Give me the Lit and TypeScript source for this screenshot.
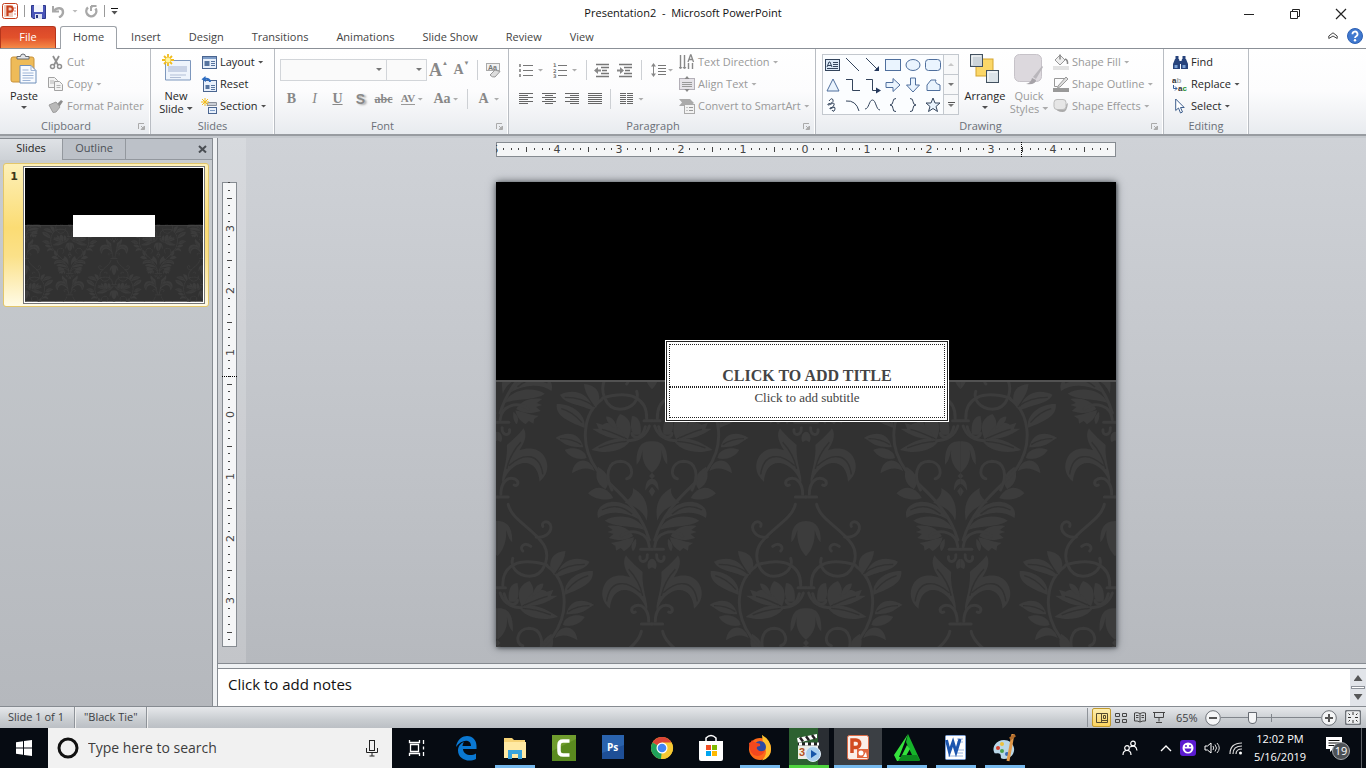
import { LitElement, html, svg, css } from "lit";
import { customElement } from "lit/decorators.js";
import { classMap } from "lit/directives/class-map.js";

const leafPaths = [
  "M158,72 C156,44 172,26 204,24 C202,46 196,58 168,96z",
  "M176,104 C184,56 230,34 276,56 C262,84 232,80 176,104z",
  "M202,156 C196,112 244,82 286,84 C290,122 250,136 202,156z",
  "M206,214 C216,170 254,164 290,186 C262,200 262,214 206,214z",
  "M200,234 C216,214 246,214 262,222 C248,246 214,254 196,246z",
  "M172,286 C184,240 236,244 240,292 C214,276 192,272 172,286z",
  "M162,272 C130,290 122,318 140,340 C168,322 172,300 162,272z",
  "M116,366 C136,330 170,326 192,352 C172,370 142,376 116,366z",
  "M40,430 C56,378 128,360 158,396 C166,408 164,418 162,426 C132,404 82,404 40,430z",
  "M22,462 C40,418 108,412 142,434 C112,456 62,446 22,462z",
  "M16,434 C6,384 26,352 58,336 C54,356 66,366 82,380 C60,388 28,400 16,434z",
  // upper blossom
  "M72,190 C52,144 72,122 96,114 C116,140 112,166 72,190z",
  "M80,190 C90,150 130,132 148,146 L168,140 L160,158 L180,158 L158,172 C130,186 110,190 80,190z",
  "M66,196 C102,176 142,196 182,222 C140,234 92,230 66,196z",
  "M104,160 C108,136 122,120 138,122 C136,140 122,152 104,160z",
  "M34,176 C30,142 40,120 60,120 C64,140 66,160 56,176z",
  // large bell
  "M0,196 C40,192 48,228 46,266 C34,254 32,238 28,222 C32,252 20,276 0,290z",
  "M0,290 L9,300 L0,310z",
  "M0,308 C16,308 20,326 20,344 C12,334 8,326 0,324z",
  "M0,332 L10,346 L0,362z",
  // lower blossom
  "M56,480 C72,452 104,446 134,450 L118,462 L134,468 L116,474 L130,486 C104,494 78,496 56,480z",
  "M54,484 C82,490 112,502 124,500 L110,510 L108,524 L94,516 L84,526 C66,514 56,502 54,484z",
  "M48,488 C44,508 52,522 58,526 C66,510 60,498 48,488z",
  // plume
  "M78,538 C92,560 78,585 66,604 C92,594 126,596 142,625 C156,650 150,680 126,698 C124,664 108,640 78,642 C50,646 26,670 16,704 C6,690 32,640 28,588 C42,575 62,560 78,538z",
  "M0,548 C12,548 18,570 10,580 L0,574z",
  // hanging bell above
  "M0,-66 C34,-66 46,-40 44,-2 C32,-14 30,-28 26,-38 C28,-10 20,20 0,40z",
];

const stemPaths = [
  "M150,70 C206,110 220,204 166,280 C136,326 40,380 8,492",
  "M32,-116 C42,-70 104,-46 138,4 C160,40 142,98 96,100 C56,98 38,70 46,46",
  "M116,-18 C150,-14 166,-40 158,-56 C148,-70 130,-62 136,-50",
  "M16,128 C14,70 60,40 148,66",
  "M100,10 C80,-6 64,14 76,24",
  "M0,134 H24",
  "M8,150 C16,174 34,196 82,194",
  "M20,152 C30,196 60,186 60,172",
  "M120,342 C142,300 134,256 94,256 C56,258 52,304 76,308",
  "M8,512 C12,468 60,456 92,480",
  "M0,520 H34",
  "M14,536 C12,562 40,562 36,542",
  "M10,736 C10,700 30,682 52,690 C68,698 60,714 50,708",
  "M0,744 H32",
];

const motif = () => svg`<g fill="#3c3c3c" stroke="none">
  ${leafPaths.map((d) => svg`<path d=${d}></path>`)}
  <g fill="none" stroke="#3c3c3c" stroke-width="9" stroke-linecap="round">
    ${stemPaths.map((d) => svg`<path d=${d}></path>`)}
  </g>
  <g fill="none" stroke="#323232" stroke-width="4">
    <path d="M172,92 C200,70 230,64 262,64 M210,140 C230,116 250,104 272,98 M212,206 C230,194 254,188 276,188 M60,414 C90,388 120,386 150,402 M34,650 C84,606 128,616 136,676 M28,660 C34,630 46,606 70,580 M82,186 C104,176 130,164 150,160 M76,196 C106,198 134,206 160,216"></path>
  </g>
</g>`;

const motifSpots = [
  [1.5, 167], [1.5, -127], [156, 0], [310, 167], [310, -127], [464.5, 0], [619, 167], [619, -127], [156, 294], [464.5, 294],
];

const slideArt = () => html`<svg class="art" viewBox="0 0 620 465" aria-hidden="true">
  <rect width="620" height="465" fill="#000"></rect>
  <svg y="198" width="620" height="267" viewBox="0 0 620 267">
    <rect width="620" height="267" fill="#313131"></rect>
    ${motifSpots.map(([x, y]) => svg`<g transform="translate(${x} ${y - 4}) scale(.3333)">
      ${motif()}<g transform="scale(-1 1)">${motif()}</g></g>`)}
    <rect width="620" height="2" fill="#525252"></rect>
  </svg>
</svg>`;

const G = "#8f8f8f";
const art: Record<string, [number, number, unknown]> = {
  ppt: [16, 16, svg`<rect x=".5" y=".5" width="15" height="15" rx="2" fill="#fff" stroke="#c43e1c"></rect><rect x="2" y="2" width="9" height="12" fill="#f0cdbf"></rect><path d="M5.500 13V3.500H8.200a2.600 2.600 0 0 1 0 5.200H5.500" fill="none" stroke="#c8401b" stroke-width="2.200"></path><path d="M12 5h2M12 8h2M12 11h2" stroke="#d88"></path>`],
  save: [15, 15, svg`<path d="M.5 1.500h14v13H2l-1.500-1.500z" fill="#4a55b8" stroke="#2e3a8c"></path><rect x="3" y="1" width="9" height="7" fill="#f3f5fb"></rect><rect x="4" y="10" width="7" height="5" fill="#dfe3f2"></rect><rect x="5" y="11" width="2" height="3" fill="#29357e"></rect>`],
  undo: [13, 13, svg`<path d="M1 1v5.500h6" fill="none" stroke="#a8a8a8" stroke-width="2"></path><path d="M2 6C5 2 11 2.500 11 7c0 3-2 4.500-4 5.500" fill="none" stroke="#a8a8a8" stroke-width="2.400"></path>`],
  redo: [13, 13, svg`<path d="M3 2.500A5 5 0 1 0 10.500 3.500" fill="none" stroke="#a8a8a8" stroke-width="2.400"></path><path d="M6 1v5M11.500 1H7v1.500" fill="none" stroke="#a8a8a8" stroke-width="2"></path>`],
  paste: [30, 32, svg`<rect x="2" y="4" width="23" height="25" rx="2" fill="#eebb58" stroke="#c9923a"></rect><path d="M8 6V3.500h3.500a2.500 2.500 0 0 1 5 0H20V6z" fill="#e4e6ea" stroke="#666a70"></path><path d="M11 12.500h11l5 5V30H11z" fill="#f8fbff" stroke="#6f8fba"></path><path d="M22 12.500v5h5M13.500 17h6M13.500 20h11M13.500 22.500h11M13.500 25h11M13.500 27.500h8" fill="none" stroke="#9db4d6"></path>`],
  cut: [14, 15, svg`<path d="M4 1l5 9M10 1L5 10" stroke="${G}" stroke-width="1.800"></path><circle cx="3.500" cy="11.500" r="2" fill="none" stroke="${G}" stroke-width="1.500"></circle><circle cx="10.500" cy="11.500" r="2" fill="none" stroke="${G}" stroke-width="1.500"></circle>`],
  copy: [16, 14, svg`<g fill="#f3f3f3" stroke="#a2a2a2"><path d="M.5 .5h6l3 3v7h-9z"></path><path d="M6.500 4.500h5l3 3v6h-8z"></path></g><path d="M2 4h4M2 6h4M8.500 8.500h4M8.500 10.500h4" stroke="#b5b5b5"></path>`],
  painter: [16, 14, svg`<path d="M9 5l4-4 2 1.500-3.500 5z" fill="#8d8d8d"></path><path d="M1 6l7-3 4 5-4 5-3 .500z" fill="#b9b9b9" stroke="#9c9c9c"></path>`],
  newslide: [30, 31, svg`<path d="M4.500 7.500h25v19.500h-25z" fill="#eef4fc" stroke="#7d97bd"></path><rect x="7" y="13" width="19" height="6" fill="#c9d3e6"></rect><path d="M9 22h16M9 24.500h11" stroke="#b2bfd6"></path><path d="M7 1v12M1 7h12M3 3l8 8M11 3l-8 8" stroke="#f1bc1d" stroke-width="1.800"></path><circle cx="7" cy="7" r="2.500" fill="#fff5a0"></circle>`],
  layout: [15, 13, svg`<rect x=".5" y=".5" width="14" height="12" fill="#e8f0fb" stroke="#4a6590"></rect><rect x="1" y="1" width="13" height="2" fill="#7d9cc7"></rect><rect x="2.500" y="5" width="5" height="5" fill="#56749f"></rect><path d="M9 5.500h4M9 7.500h4M9 9.500h4" stroke="#56749f"></path>`],
  reset: [16, 16, svg`<rect x="2.500" y="4.500" width="13" height="11" fill="#e8f0fb" stroke="#4a6590"></rect><rect x="4.500" y="9" width="4" height="4" fill="#56749f"></rect><path d="M10 9.500h4M10 11.500h4M10 13.500h4" stroke="#56749f"></path><path d="M9 6C9 3.500 7 2.500 4 3" fill="none" stroke="#2d6cc0" stroke-width="2"></path><path d="M4.500 0L.5 3.200 5 6z" fill="#2d6cc0"></path>`],
  section: [16, 16, svg`<path d="M7 4.500h8.500v3H6z" fill="#c9cdd4" stroke="#8a909b"></path><rect x="7.500" y="9.500" width="8" height="6" fill="#e8f0fb" stroke="#4a6590"></rect><path d="M9 12.500h5" stroke="#7d9cc7"></path><path d="M4 0v8M0 4h8M1 1l6 6M7 1L1 7" stroke="#f1bc1d"></path>`],
  clear: [17, 17, svg`<rect x="1.500" y="1.500" width="13" height="7" fill="#f1f1f1" stroke="#aaa"></rect><text x="3" y="8" font-size="7" font-weight="700" fill="#777" font-family="Liberation Sans, sans-serif">Aa</text><path d="M5 13l5-5 5 1.500-5 5.500q-3 .500-5-2z" fill="#ddd" stroke="#999"></path>`],
  bullets: [14, 14, svg`<path d="M4 2.500h10M4 7.500h10M4 12.500h10" stroke="#777"></path><g fill="#999"><rect y="1" width="2" height="3"></rect><rect y="6" width="2" height="3"></rect><rect y="11" width="2" height="3"></rect></g>`],
  numbers: [14, 15, svg`<path d="M5 2.500h9M5 7.500h9M5 12.500h9" stroke="#777"></path><g font-size="5" fill="#777" font-family="DejaVu Sans, sans-serif"><text y="4">1</text><text y="9.500">2</text><text y="15">3</text></g>`],
  outdent: [16, 15, svg`<path d="M2 1.500h13M7 4.500h8M8 7.500h5M7 10.500h8M2 13.500h13" stroke="#777" stroke-width="1.400"></path><path d="M0 7.500L4 4v2.500h3v2H4V11z" fill="#888"></path>`],
  indent: [16, 15, svg`<path d="M2 1.500h13M7 4.500h8M8 7.500h5M7 10.500h8M2 13.500h13" stroke="#777" stroke-width="1.400"></path><path d="M7 7.500L3 4v2.500H0v2h3V11z" fill="#888"></path>`],
  spacing: [15, 16, svg`<path d="M7 3.500h8M7 6.500h8M7 9.500h8M7 12.500h8" stroke="#777"></path><path d="M2.500 2v12" stroke="#888"></path><path d="M0 4.500L2.500 1 5 4.500zM0 11.500L2.500 15 5 11.500z" fill="#888"></path>`],
  left: [14, 12, svg`<path d="M0 .5h14M0 2.500h9M0 4.500h14M0 6.500h9M0 8.500h14M0 10.500h9" stroke="#666"></path>`],
  center: [14, 12, svg`<path d="M0 .5h14M3 2.500h8M0 4.500h14M3 6.500h8M0 8.500h14M3 10.500h8" stroke="#666"></path>`],
  right: [14, 12, svg`<path d="M0 .5h14M5 2.500h9M0 4.500h14M5 6.500h9M0 8.500h14M5 10.500h9" stroke="#666"></path>`],
  justify: [14, 12, svg`<path d="M0 .5h14M0 2.500h14M0 4.500h14M0 6.500h14M0 8.500h14M0 10.500h14" stroke="#666"></path>`],
  columns: [13, 12, svg`<path d="M0 .5h6M0 2.500h6M0 4.500h6M0 6.500h6M0 8.500h6M0 10.500h6M7 .5h6M7 2.500h6M7 4.500h6M7 6.500h6M7 8.500h6M7 10.500h6" stroke="#666"></path>`],
  textdir: [16, 16, svg`<path d="M1.500 1v13M5.500 1v13M9.500 9v6M13.500 9v6" stroke="#888" stroke-width="1.400"></path><path d="M0 13l1.500 2L3 13M4 13l1.500 2L7 13" fill="none" stroke="#888"></path><path d="M9 8l2.500-7h.500L14.500 8M10 5.500h4" fill="none" stroke="#888" stroke-width="1.300"></path>`],
  aligntext: [16, 16, svg`<rect x=".5" y="2.500" width="15" height="11" fill="#e6e3e8" stroke="#b3afb7"></rect><path d="M3 6.500h10M3 8.500h10M3 10.500h10" stroke="#999"></path><path d="M5.500 3L8 0l2.500 3zM5.500 13L8 16l2.500-3z" fill="#888"></path>`],
  smartart: [16, 16, svg`<path d="M0 1h11l4 4-4 3H0l3-3.500z" fill="#aaa"></path><rect x="5.500" y="6.500" width="10" height="9" fill="#f2f2f2" stroke="#aaa"></rect><path d="M7.500 9.500h1M7.500 12.500h1M10 9.500h4M10 12.500h4" stroke="#999"></path>`],
  arrange: [32, 32, svg`<rect x="7" y="6" width="17" height="17" fill="#fbd768" stroke="#d3a42e"></rect><rect x="1.500" y="1.500" width="12" height="12" fill="#ccd4da" stroke="#42515f"></rect><rect x="17.500" y="17.500" width="12" height="12" fill="#dbe3e8" stroke="#42515f"></rect><path d="M3 12V3h9" fill="none" stroke="#fff"></path><path d="M19 28v-9h9" fill="none" stroke="#fff"></path>`],
  quick: [32, 32, svg`<rect x="1.500" y="1.500" width="27" height="27" rx="5" fill="#dcd8dd" stroke="#c6c2c8"></rect><path d="M29 13L20 24l3 2 7-12z" fill="#b9b6bb"></path><path d="M13 31q5-1 6-6l4 2q0 5-10 4z" fill="#a6a3a8"></path>`],
  fill: [16, 16, svg`<path d="M7 1L2 6l5 5 5-5z" fill="#eee" stroke="#999"></path><path d="M7 .500v5M12 5q3 1 2.500 5" fill="none" stroke="#888" stroke-width="1.500"></path><rect y="12" width="16" height="4" fill="#e2e2e2"></rect>`],
  outline: [16, 16, svg`<path d="M12 2.500H1.500v8h3" fill="none" stroke="#999"></path><path d="M5 10l8-9 2 2-8 8-2.500.500z" fill="#ddd" stroke="#999"></path><rect y="12" width="16" height="4" fill="#999"></rect>`],
  effects: [16, 16, svg`<path d="M2 9q1 5 8 5 4 0 5-9L9 10z" fill="#aaa"></path><rect x="1" y="1.500" width="12" height="10" rx="3" fill="#e6e6e6" stroke="#bbb"></rect>`],
  find: [15, 13, svg`<g fill="#27437c"><path d="M2 3h4l1 4v6H0V8z"></path><path d="M9 3h4l2 5v5H8V7z"></path><rect x="2.500" width="3" height="3"></rect><rect x="9.500" width="3" height="3"></rect><rect x="6" y="5" width="3" height="3"></rect></g><path d="M1.500 12V9h3v3zM9.500 12V9h3v3z" fill="#7aa0d4"></path>`],
  replace: [17, 18, svg`<g font-family="Liberation Sans, sans-serif" font-size="8" font-weight="700"><text y="8" fill="#333">a<tspan fill="#aaa">b</tspan></text><text x="6" y="16" fill="#333">a<tspan fill="#23902f">c</tspan></text></g><path d="M1.500 10v3.500H5M3 11.500l2 2-2 2" fill="none" stroke="#365f9c"></path>`],
  select: [10, 16, svg`<path d="M.7 1v11.500l2.800-2.500 2 5 2-1-2-4.500h3.700z" fill="#fff" stroke="#3f5f8d"></path>`],
  launcher: [7, 7, svg`<path d="M.5 6V.5H6" fill="none" stroke="#aaa"></path><path d="M6.500 3v3.500H3zM3 3l3 3" fill="#aaa" stroke="#aaa"></path>`],
  help: [16, 16, svg`<circle cx="8" cy="8" r="7.500" fill="#3f78cf" stroke="#2e61b4"></circle><path d="M5.500 6.200a2.500 2.500 0 1 1 3.700 2q-1.200.8-1.200 1.800" fill="none" stroke="#fff" stroke-width="1.800"></path><circle cx="8" cy="12.300" r="1.200" fill="#fff"></circle>`],
  collapse: [10, 8, svg`<path d="M.8 4L5 .8 9.200 4v2.500L5 4 .8 6.500z" fill="none" stroke="#444"></path>`],
  min: [12, 12, svg`<path d="M1 6.500h10" stroke="#222"></path>`],
  restore: [12, 12, svg`<path d="M1.500 3.500h7v7h-7zM3.500 3V1.500h7v7H9" fill="none" stroke="#222"></path>`],
  close: [12, 12, svg`<path d="M1 1l10 10M11 1L1 11" stroke="#222" stroke-width="1.200"></path>`],
  panelx: [9, 8, svg`<path d="M1 1l7 6.500M8 1L1 7.500" stroke="#4a4e53" stroke-width="2"></path>`],
  normal: [12, 10, svg`<path d="M.5 .5h11v9H.5zM5.500 .5v9M7.500 2.500h2v3h-2zM5.500 7.500h6" fill="none" stroke="#544a2e"></path>`],
  sorter: [12, 10, svg`<path d="M.5 .5h4v3h-4zM7.500 .5h4v3h-4zM.5 6.500h4v3h-4zM7.500 6.500h4v3h-4z" fill="none" stroke="#444"></path>`],
  reading: [12, 11, svg`<path d="M6 1.500Q3 0 .5 1v8Q3 8.500 6 10 9 8.500 11.500 9V1Q9 0 6 1.500zM6 1.500V10M2 3.500h2.500M2 5.500h2.500M7.500 3.500H10M7.500 5.500H10" fill="none" stroke="#444"></path>`],
  show: [12, 11, svg`<path d="M0 .5h12M1.500 1v4.500h9V1M6 5.500v4M3 10.500h6" fill="none" stroke="#444"></path>`],
  minus: [16, 16, svg`<circle cx="8" cy="8" r="7.300" fill="#f4f5f6" stroke="#6f747a"></circle><path d="M4 8h8" stroke="#555" stroke-width="2"></path>`],
  plus: [16, 16, svg`<circle cx="8" cy="8" r="7.300" fill="#f4f5f6" stroke="#6f747a"></circle><path d="M4 8h8M8 4v8" stroke="#555" stroke-width="2"></path>`],
  fit: [16, 15, svg`<rect x=".5" y=".5" width="15" height="14" rx="2" fill="#eceeef" stroke="#70757b" stroke-width="1.500"></rect><path d="M8 2v3M8 10v3M3 7.500h3M10 7.500h3M3.500 3.500L5 5M12.500 3.500L11 5M3.500 11.500L5 10M12.500 11.500L11 10" stroke="#333"></path>`],
  windows: [16, 16, svg`<path d="M0 2.200L7 1.300v6.200H0zM8 1.100L16 0v7.500H8zM0 8.500h7v6.200L0 13.800zM8 8.500h8V16L8 14.900z" fill="#fff"></path>`],
  cortana: [22, 22, svg`<circle cx="11" cy="11" r="9" fill="none" stroke="#111" stroke-width="3"></circle>`],
  mic: [12, 18, svg`<rect x="3.500" y="1.500" width="5" height="10" fill="none" stroke="#222"></rect><path d="M.5 9v4.500h11V9M6 13.500V17M3.500 17h5" fill="none" stroke="#222"></path>`],
  taskview: [18, 18, svg`<path d="M1.500 1v2.500h10V1M1.500 17v-2.500h10V17M2.500 5.500h8v7h-8zM15.500 1v4M15.500 13v4M15.500 7.500v3" fill="none" stroke="#fff" stroke-width="1.300"></path>`],
  edge: [24, 26, svg`<path d="M2 12C3 4 9 1 13 1c6 0 9.500 4.500 9.500 10v3H9c.5 6 8 7.500 13 4.500v5.500C14 28 4 24 4 15.500 4 11 7 8 10 7c-1 1.500-1.500 3-1.500 4h8.500c0-7-9-7.500-15 1z" fill="#0a78d2"></path>`],
  explorer: [24, 24, svg`<path d="M1 2h8l2 2h11v18H1z" fill="#f6d376"></path><path d="M1 6h22v16H1z" fill="#ffe9a3"></path><path d="M5 23V14h14v9h-4v-5H9v5z" fill="#38a3dc"></path>`],
  camtasia: [24, 26, svg`<rect width="24" height="26" fill="#6f9c2e"></rect><path d="M0 16L24 4v22H0z" fill="#5a8a1f"></path><path d="M17.500 6H11q-4 0-4 4v6q0 4 4 4h6.500" fill="none" stroke="#fff" stroke-width="3.500"></path>`],
  ps: [22, 26, svg`<rect width="22" height="24" fill="#1e4f96"></rect><path d="M0 0h22v10L0 18z" fill="#2a63ad"></path><text x="5" y="16" font-size="10" font-weight="700" fill="#fff" font-family="Open Sans, sans-serif">Ps</text>`],
  chrome: [24, 24, svg`<circle cx="12" cy="12" r="11" fill="#f2c12e"></circle><path d="M12 12L2.500 6.500A11 11 0 0 1 21.500 6.500z" fill="#db4437"></path><path d="M12 12L2.500 6.500A11 11 0 0 0 11 23l5-9z" fill="#1fa25b"></path><path d="M12 12L12 6.500h9.500A11 11 0 0 1 11 23z" fill="#f7c933"></path><circle cx="12" cy="12" r="5.500" fill="#fff"></circle><circle cx="12" cy="12" r="4.300" fill="#4285f4"></circle>`],
  store: [24, 28, svg`<path d="M7 8V4q5-5 10 0v4" fill="none" stroke="#fff" stroke-width="1.500"></path><path d="M0 7h24v18q0 2-2 2H2q-2 0-2-2z" fill="#fff"></path><path d="M7 11h5v5H7z" fill="#f04e24"></path><path d="M13 11h5v5h-5z" fill="#7fba00"></path><path d="M7 17h5v5H7z" fill="#00a4ef"></path><path d="M13 17h5v5h-5z" fill="#ffb900"></path>`],
  firefox: [24, 26, svg`<circle cx="12" cy="14" r="11" fill="#ff6a1a"></circle><path d="M14 0q9 5 9 14 0 9-9 11.500 6-6 3-13T14 0z" fill="#ffc02e"></path><circle cx="12" cy="12" r="6" fill="#2b49a5"></circle><path d="M1 8q2 0 3-3 2 3 5 3 4 0 3 3-4 0-3 3 3 4 8 1-2 6-8 6Q1 20 1 8z" fill="#f4481e"></path>`],
  clapper: [24, 30, svg`<rect x="1" y="11" width="20" height="15" fill="#eceee6"></rect><path d="M0 5L20 1v4L1 10z" fill="#fff"></path><path d="M3 4.500l3 4M9 3.200l3 4M15 2l3 4" stroke="#222" stroke-width="2.500"></path><path d="M1 11h20" stroke="#222" stroke-width="3"></path><path d="M2 11h20" stroke="#fff" stroke-width="3" stroke-dasharray="3 3"></path><text x="2" y="23" font-size="11" font-weight="700" fill="#b5521f" font-family="Liberation Sans, sans-serif">3</text><circle cx="16" cy="21" r="7.500" fill="#a9d0ee" stroke="#e2effa"></circle><path d="M14 17l6 4-6 4z" fill="#1556a8"></path>`],
  pptbig: [24, 28, svg`<rect x="1.500" y="1.500" width="21" height="24" rx="2" fill="#fbeee8" stroke="#dd6a45"></rect><path d="M6 19V6h4a3.700 3.700 0 0 1 0 7.500H6" fill="none" stroke="#d24a20" stroke-width="3.500"></path><rect x="11" y="15" width="11" height="9" fill="#e2673f"></rect><circle cx="15" cy="19" r="2.500" fill="#fff"></circle><path d="M17 23l3-5 1 5z" fill="#fff"></path>`],
  green: [26, 28, svg`<path d="M14 0l12 26H8l4-5h6L12 8z" fill="#16b52a"></path><path d="M14 0L0 21l3 6h6l7-12-3-4-6 12h-2z" fill="#35e23c"></path><path d="M4 27l4-6h15l3 6z" fill="#0c8a1d"></path>`],
  word: [24, 28, svg`<rect x="1.500" y="1.500" width="20" height="24" rx="1" fill="#fff" stroke="#7d9fd1"></rect><path d="M13 5h6M13 8h6M14 16h6M13 19h6M4 22h15" stroke="#9db8e0"></path><path d="M2.500 6l3 12 3.500-10 3 10 4-13" fill="none" stroke="#1d56ae" stroke-width="3"></path>`],
  paint: [26, 28, svg`<path d="M12 6C4 6 0 13 2 18c1 3 4 0 6 2s-1 5 4 5c7 0 11-6 10-11-1-5-5-8-10-8z" fill="#b9d7e8"></path><circle cx="6" cy="14" r="2" fill="#d9402c"></circle><circle cx="10" cy="10" r="2" fill="#ecc03a"></circle><circle cx="15" cy="20" r="2" fill="#3768b5"></circle><circle cx="10" cy="17" r="2" fill="#4ba14d"></circle><path d="M21 0L16 27" stroke="#e29a4a" stroke-width="3"></path><path d="M18 5L23 1" stroke="#b26d2c" stroke-width="3"></path>`],
  people: [16, 16, svg`<g fill="none" stroke="#fff" stroke-width="1.200"><circle cx="5" cy="8" r="2.300"></circle><path d="M1 15q0-4.500 4-4.500t4 4.500"></path><circle cx="11" cy="3.500" r="2.300"></circle><path d="M8 7q6-3 7 3.500"></path></g>`],
  up: [12, 8, svg`<path d="M1 7l5-5 5 5" fill="none" stroke="#fff" stroke-width="1.400"></path>`],
  yahoo: [16, 16, svg`<rect width="16" height="16" rx="3" fill="#5b1bd0"></rect><circle cx="8" cy="8" r="5.500" fill="#fff"></circle><path d="M4.500 8.500h7q-1 3.500-3.500 3.500T4.500 8.500z" fill="#5b1bd0"></path><circle cx="6" cy="6" r="1" fill="#5b1bd0"></circle><circle cx="10" cy="6" r="1" fill="#5b1bd0"></circle>`],
  sound: [17, 14, svg`<path d="M1 5h2.500L7 2v10L3.500 9H1z" fill="none" stroke="#fff"></path><path d="M9 5q1.500 2 0 4M11 3.500q3 3.500 0 7M13 2q4.500 5 0 10" fill="none" stroke="#ddd"></path>`],
  wifi: [14, 14, svg`<g fill="none" stroke="#ddd" stroke-width="1.200"><path d="M1 13Q1 2 13 2"></path><path d="M4 13Q4 5 13 5"></path><path d="M7 13Q7 8 13 8"></path></g><circle cx="11.500" cy="12" r="1.500" fill="#fff"></circle>`],
  notify: [26, 26, svg`<path d="M1 2h16v12H8l-3 3v-3H1z" fill="#fff"></path><path d="M3.500 5.500h11M3.500 8h11M3.500 10.500h8" stroke="#111"></path><circle cx="16" cy="16" r="8.500" fill="#4d5156" stroke="#a5a8ab"></circle><text x="16" y="20" text-anchor="middle" font-size="11" fill="#fff" font-family="Open Sans, sans-serif">19</text>`],
};

const icon = (name: string) => {
  const [w, h, body] = art[name];
  return html`<svg width=${w} height=${h} viewBox="0 0 ${w} ${h}" aria-hidden="true">${body}</svg>`;
};

const shapes = [
  svg`<rect x="2.500" y="4.500" width="14" height="11" fill="#dce9f7" stroke="#33445c"></rect><path d="M4 12l2-5h1l2 5M5 10.500h3M10 7.500h5M10 9.500h5M10 11.500h5M4 13.500h11" fill="none" stroke="#33445c"></path>`,
  svg`<path d="M3 3l13 13" stroke="#33445c"></path>`,
  svg`<path d="M3 3l12 12" stroke="#33445c"></path><path d="M16 16v-5l-5 5z" fill="#24385c"></path>`,
  svg`<rect x="2.500" y="4.500" width="15" height="11" fill="#eaf4fe" stroke="#4f6f9d"></rect>`,
  svg`<ellipse cx="10" cy="10" rx="7" ry="5.500" fill="#eaf4fe" stroke="#4f6f9d"></ellipse>`,
  svg`<rect x="2.500" y="4.500" width="15" height="11" rx="3" fill="#eaf4fe" stroke="#4f6f9d"></rect>`,
  svg`<path d="M10 4l6 12H4z" fill="#eaf4fe" stroke="#4f6f9d"></path>`,
  svg`<path d="M3 4.500h6.500v11H17" fill="none" stroke="#33445c"></path>`,
  svg`<path d="M3 4.500h6.500v11H14" fill="none" stroke="#33445c"></path><path d="M13 12.500l5 3-5 3z" fill="#24385c"></path>`,
  svg`<path d="M3 7.500h7v-4l7 6.500-7 6.500v-4H3z" fill="#eaf4fe" stroke="#4f6f9d"></path>`,
  svg`<path d="M7.500 3h5v7h4L10 17l-6.500-7h4z" fill="#eaf4fe" stroke="#4f6f9d"></path>`,
  svg`<path d="M8 5h5q-2 3 4 5v5.500H4V10z" fill="#eaf4fe" stroke="#4f6f9d"></path>`,
  svg`<path d="M6 6q3-4 4-1t-5 4q-1 2 3 0t3 1-4 3q-1 2 2 0t3 0-1 3-2-1" fill="none" stroke="#33445c"></path>`,
  svg`<path d="M3 6q10-1 13 10" fill="none" stroke="#33445c"></path>`,
  svg`<path d="M2 14C6 14 6 5 9.500 5S13 15 17 15" fill="none" stroke="#33445c"></path>`,
  svg`<path d="M13 3.500q-3 0-3 3t-3 3.500q3 0 3 3.500t3 3" fill="none" stroke="#33445c"></path>`,
  svg`<path d="M7 3.500q3 0 3 3t3 3.500q-3 0-3 3.500t-3 3" fill="none" stroke="#33445c"></path>`,
  svg`<path d="M10 3l2 5h5l-4 3.500 1.500 5-4.500-3-4.500 3L7 11.500 3 8h5z" fill="#eaf4fe" stroke="#33445c"></path>`,
];

type Item = { icon: string; text: string; off?: boolean; menu?: boolean };
const clipboardItems: Item[] = [
  { icon: "cut", text: "Cut", off: true },
  { icon: "copy", text: "Copy", off: true, menu: true },
  { icon: "painter", text: "Format Painter", off: true },
];
const slideItems: Item[] = [
  { icon: "layout", text: "Layout", menu: true },
  { icon: "reset", text: "Reset" },
  { icon: "section", text: "Section", menu: true },
];
const textItems: Item[] = [
  { icon: "textdir", text: "Text Direction", off: true, menu: true },
  { icon: "aligntext", text: "Align Text", off: true, menu: true },
  { icon: "smartart", text: "Convert to SmartArt", off: true, menu: true },
];
const shapeItems: Item[] = [
  { icon: "fill", text: "Shape Fill", off: true, menu: true },
  { icon: "outline", text: "Shape Outline", off: true, menu: true },
  { icon: "effects", text: "Shape Effects", off: true, menu: true },
];
const editItems: Item[] = [
  { icon: "find", text: "Find" },
  { icon: "replace", text: "Replace", menu: true },
  { icon: "select", text: "Select", menu: true },
];

const apps = [
  { icon: "taskview", name: "Task View" },
  { icon: "edge", name: "Microsoft Edge" },
  { icon: "explorer", name: "File Explorer", open: true },
  { icon: "camtasia", name: "Camtasia" },
  { icon: "ps", name: "Photoshop" },
  { icon: "chrome", name: "Chrome" },
  { icon: "store", name: "Store" },
  { icon: "firefox", name: "Firefox", open: true },
  { icon: "clapper", name: "Media Player", open: true, busy: true },
  { icon: "pptbig", name: "PowerPoint", open: true, active: true },
  { icon: "green", name: "Editor", open: true },
  { icon: "word", name: "Word", open: true },
  { icon: "paint", name: "Paint", open: true },
];

const ruler = (length: number, vertical: boolean, cursor: number) => {
  const mid = length / 2 - (vertical ? 0 : 1);
  const last = Math.floor(mid / 7.75);
  const marks = [];
  for (let i = vertical ? -last : -last - 1; i <= last; i++) {
    const p = mid + i * 7.75;
    if (i % 8 === 0) {
      marks.push(vertical
        ? svg`<text transform="translate(12 ${p}) rotate(-90)" text-anchor="middle">${Math.abs(i / 8)}</text>`
        : svg`<text x=${p} y="11" text-anchor="middle">${Math.abs(i / 8)}</text>`);
    } else {
      const size = i % 8 === 4 || i % 8 === -4 ? 5 : 2;
      const at = Math.round(p);
      marks.push(vertical
        ? svg`<rect x=${size === 5 ? 5 : 6} y=${at} width=${size} height="1"></rect>`
        : svg`<rect x=${at} y=${size === 5 ? 5 : 6} width="1" height=${size}></rect>`);
    }
  }
  const box = vertical ? `0 0 15 ${length}` : `0 0 ${length} 15`;
  return html`<svg class="ruler" viewBox=${box} aria-hidden="true">
    <rect x=".5" y=".5" width=${(vertical ? 15 : length) - 1} height=${(vertical ? length : 15) - 1} fill="#f5f6f7" stroke="#868b91"></rect>
    <g fill="#444">${marks}</g>
    ${vertical
      ? svg`<path d="M0 ${cursor}.5H15" stroke="#000" stroke-dasharray="1 1"></path>`
      : svg`<path d="M${cursor}.5 0V15" stroke="#000" stroke-dasharray="1 1"></path>`}
  </svg>`;
};

@customElement("app-root")
export class AppRoot extends LitElement {
  static styles = css`
    :host {
      display: block;
      font: 11px/14px "Open Sans", "Noto Sans", sans-serif;
      color: #262626;
      background: #fff;
    }
    * { box-sizing: border-box; }
    button, select, input, textarea {
      font: inherit; color: inherit; background: none; border: 0; padding: 0; margin: 0; border-radius: 0;
    }
    svg { display: block; flex: none; }
    .window { display: flex; flex-direction: column; min-height: 100vh; margin-right: 2px; }
    .caret { width: 6px; height: 3px; flex: none; background: currentColor; clip-path: polygon(0 0, 100% 0, 50% 100%); opacity: .8; }

    .title { display: grid; grid-template-columns: 1fr auto 1fr; height: 26px; align-items: center; }
    .quick { display: flex; align-items: center; gap: 6px; padding: 0 0 4px 2px; }
    .quick .bar { width: 1px; height: 12px; background: #999; }
    .quick .history { display: flex; align-items: center; gap: 7px; color: #aaa; }
    .quick .more { border-top: 1px solid #111; padding-top: 2px; }
    .quick .more .caret { display: block; width: 7px; height: 4px; }
    .title h1 { margin: 0; font-size: 11px; line-height: 26px; font-weight: 400; color: #111; white-space: pre; }
    .controls { display: flex; justify-content: flex-end; padding-right: 2px; }
    .controls button { width: 46px; height: 26px; display: grid; place-items: center; padding-top: 2px; }

    .tabs { display: flex; height: 23px; border-bottom: 1px solid #8b9097; color: #444; }
    .tabs button { padding: 0 14px; height: 22px; line-height: 22px; }
    .tabs .file { width: 56px; padding: 0 0 2px; margin-right: 4px; color: #fff; line-height: 20px; border-radius: 3px 3px 0 0; border: 1px solid #b5361c; border-bottom: 0;
      background: linear-gradient(#d8472a, #e2512b 50%, #f58a47); }
    .tabs .home { height: 23px; line-height: 20px; padding: 0 12px 2px; background: #fff; border: 1px solid #9da2a8; border-bottom: 0; border-radius: 3px 3px 0 0; }
    .tabs .aids { margin-left: auto; display: flex; align-items: center; gap: 9px; padding: 0 3px 2px 0; }
    .tabs .aids button { padding: 0; height: auto; }

    .ribbon { display: flex; background: linear-gradient(#fff, #fcfcfd 50%, #e8ebef); border-bottom: 2px solid #989ca1; }
    .group { display: flex; flex-direction: column; flex: none; padding-top: 2px; border-right: 1px solid #b9bdc3; box-shadow: inset -1px 0 #fff; }
    .group h2 { position: relative; margin: 0; height: 17px; line-height: 18px; padding-right: 18px; font-size: 11px; font-weight: 400; text-align: center; color: #6a6f77; }
    .group h2.plain { padding-right: 0; }
    .group h2 svg { position: absolute; right: 5px; top: 6px; }
    .body { display: flex; height: 66px; }
    .clip { width: 151px; } .slides { width: 124px; } .font { width: 234px; } .para { width: 307px; } .draw { width: 348px; } .edit { width: 85px; }
    .edit .body { padding-left: 8px; }
    .list { display: flex; flex-direction: column; }
    .item { display: grid; grid-template-columns: 16px auto auto; justify-content: start; justify-items: center; align-items: center; column-gap: 3px; height: 22px; text-align: left; white-space: nowrap; }
    .off { color: #999; }
    .big { display: flex; flex-direction: column; align-items: center; padding-top: 2px; }
    .big .pic { height: 36px; }
    .big span { line-height: 13px; white-space: nowrap; }
    .big .two { display: flex; align-items: center; gap: 3px; }
    .big .under { margin-top: 4px; }
    .clip .big { width: 48px; } .slides .big { width: 50px; } .draw .big { width: 44px; }

    .tools { display: flex; flex-direction: column; flex: none; gap: 7px; padding-top: 8px; }
    .tools > div { display: flex; height: 22px; align-items: center; }
    .font .tools { padding-left: 5px; }
    .para .tools { padding-left: 5px; width: 170px; }
    .field { position: relative; display: block; }
    .field select { display: block; height: 22px; width: 107px; border: 1px solid #d2d5d9; background: #fafafa; appearance: none; opacity: 1; }
    .field.size select { width: 40px; border-left: 0; }
    .field .caret { position: absolute; right: 5px; top: 9px; color: #555; }
    .glyph { width: 23px; flex: none; display: flex; align-items: center; justify-content: center; gap: 2px; color: #888; font: 700 14px/22px "Liberation Serif", serif; }
    .glyph .caret { color: #999; }
    .glyph.wide { width: 34px; }
    .glyph.pick { width: 34px; gap: 5px; }
    .glyph.grow { font-size: 18px; }
    .glyph.grow, .glyph.shrink { gap: 0; }
    .glyph.shrink { font-size: 14px; }
    .glyph sup { font-size: 6px; line-height: 8px; align-self: flex-start; }
    .glyph i { font-weight: 400; }
    .glyph .shadow { text-shadow: 2px 1px 2px #aaa; font-family: "Liberation Sans", sans-serif; }
    .glyph s { font-size: 12px; }
    .glyph .av { font-size: 11px; line-height: 11px; border-bottom: 1px solid #999; }
    .rule { width: 1px; height: 20px; background: #cdd0d4; margin: 0 4px; }

    .gallery { display: grid; grid-template-columns: repeat(6, 20px) 15px; grid-template-rows: repeat(3, 20px); width: 137px; height: 61px; margin: 3px 4px 0 6px;
      border: 1px solid #c3c8ce; background: #fbfdff; align-content: space-between; }
    .gallery .scroll { grid-column: 7; display: grid; place-items: center; place-content: center; border-left: 1px solid #c3c8ce; border-bottom: 1px solid #c3c8ce; background: #f7f8f9; color: #555; }
    .gallery .scroll:first-of-type { color: #bbb; }
    .gallery .last { border-top: 1px solid; width: 7px; height: 2px; }
    .gallery .flip { transform: scaleY(-1); }
    .draw .list { margin-left: 2px; }

    .work { flex: 1; display: grid; grid-template-columns: 213px 1fr; column-gap: 4px; background: #eff1f3; border-top: 2px solid #c5c9ce; }
    .pane { display: flex; flex-direction: column; border-right: 1px solid #868b91; border-top: 1px solid #868b91; background: linear-gradient(#c9cdd1, #b5b8bd); }
    .pane nav { display: flex; height: 21px; border-bottom: 1px solid #93989e; background: #bcc1c8; color: #4c5157; }
    .pane nav button { border-right: 1px solid #93989e; width: 63px; line-height: 18px; padding: 0 0 2px; }
    .pane nav .on { background: linear-gradient(#dfe2e6, #cdd1d6); color: #222; margin-bottom: -1px; padding-bottom: 3px; }
    .pane nav .x { border: 0; width: 20px; margin-left: auto; display: grid; place-items: center; padding: 0; }
    .thumb { display: grid; grid-template-columns: 20px 1fr; height: 144px; margin: 3px 3px 0 3px; padding: 2px 3px 0 0; border: 1px solid #e3c66a; border-radius: 3px;
      background: linear-gradient(#fdf0b8, #fbdc74 45%, #fbe189 65%, #fffbe6); text-align: center; font: 700 11px/22px "DejaVu Sans", sans-serif; color: #3c3518; }
    .thumb .frame { height: 138px; border: 1px solid #777; background: #fff; padding: 1px; margin-left: -1px; }
    .mini { position: relative; }
    .mini .blank { position: absolute; left: 27%; top: 35%; width: 46%; height: 17%; background: #fff; }
    .art { width: 100%; height: auto; }

    .main { display: flex; flex-direction: column; border-left: 1px solid #868b91; min-width: 0; }
    .stage { flex: 1; display: grid; grid-template-columns: 28px 1fr; grid-template-rows: 44px 1fr; background: linear-gradient(#cfd2d7, #b6b9be); border-bottom: 1px solid #868b91; }
    .side { grid-row: 1 / 3; background: #ffffff2e; padding: 44px 0 0 4px; }
    .ruler { font: 11px "DejaVu Sans", sans-serif; overflow: hidden; }
    .side .ruler { width: 15px; }
    .top, .canvas { display: grid; justify-content: center; align-content: start; }
    .top { padding-top: 4px; }
    .top .ruler, .slide { width: 620px; }
    .slide { position: relative; box-shadow: 0 0 8px #4b5056, 1px 1px 3px #6e7379; margin-bottom: 16px; }
    .card { position: absolute; left: 169px; top: 158px; width: 284px; height: 82px; padding: 3px; background: #fff; border: 1px solid #fff; box-shadow: inset 0 0 0 1px #222; color: #444; text-align: center; font-family: "Liberation Serif", serif; display: grid; grid-template-rows: 43px 1fr; }
    .card div { border: 1px dotted #222; }
    .card .heading { font-size: 16px; font-weight: 700; line-height: 20px; padding-top: 21px; }
    .card .sub { font-size: 13px; line-height: 20px; }

    .notes { display: grid; grid-template-columns: 1fr 16px; height: 38px; margin-top: 4px; border-top: 1px solid #868b91; background: #fff; }
    .notes textarea { display: block; width: 100%; height: 37px; resize: none; overflow: hidden; padding: 5px 10px; font-size: 15px; line-height: 21px; outline: 0; }
    .notes textarea::placeholder { color: #111; opacity: 1; }
    .bars { display: flex; flex-direction: column; align-items: center; justify-content: space-between; background: #e1e4e9; padding: 6px 0; color: #333; }
    .bars .caret { width: 9px; height: 6px; }
    .bars .flip { transform: scaleY(-1); }
    .bars i { width: 14px; height: 3px; border: 1px solid #8d929a; background: #fff; }

    .status { display: flex; align-items: center; height: 22px; padding-right: 6px; border-top: 1px solid #868b91; background: linear-gradient(#e6e8eb, #c9cdd1 60%, #bbbfc4); color: #3c3f44; }
    .status > span { line-height: 20px; height: 21px; padding: 0 8px 0 9px; border-right: 1px solid #8e9399; box-shadow: 1px 0 #eee; }
    .status > span:first-child { padding: 0 10px 0 8px; }
    .views { margin-left: auto; display: flex; align-items: center; border-left: 1px solid #8e9399; padding-left: 4px; }
    .views button { width: 19px; height: 19px; display: grid; place-items: center; }
    .views .on { border: 1px solid #c29a2c; border-radius: 2px; background: linear-gradient(#fdeeb0, #fbd35e); }
    .percent { width: 37px; padding-left: 8px; line-height: 20px; }
    .zoom { width: 100px; height: 16px; appearance: none; outline: 0; background: linear-gradient(#80858b, #80858b) center / 100% 1px no-repeat, linear-gradient(#80858b, #80858b) center / 1px 8px no-repeat; }
    .zoom::-webkit-slider-thumb { appearance: none; width: 9px; height: 12px; border: 1px solid #666b72; border-radius: 1px 1px 5px 5px; background: #f4f5f6; }
    .fit { margin: 0 -1px 0 8px; }

    .taskbar { display: flex; height: 40px; background: #060b12; color: #fff; }
    .taskbar button { display: grid; place-items: center; }
    .start { width: 48px; }
    .search { width: 344px; display: flex; align-items: center; background: #f1f1f1; padding: 0 14px 0 9px; gap: 9px; color: #222; }
    .search input { flex: 1; min-width: 0; font-size: 14px; line-height: 20px; outline: 0; }
    .search input::placeholder { color: #3d3d3d; opacity: 1; }
    .apps { display: flex; gap: 1px; margin-left: 1px; }
    .apps button { width: 48px; height: 40px; background: linear-gradient(#76b9ed, #76b9ed) center bottom / 0 3px no-repeat; }
    .apps .open { background-size: 40px 3px; }
    .apps .active { background-color: #3b3f44; background-size: 48px 3px; }
    .apps .busy { background: linear-gradient(#4fd33f, #4fd33f) center bottom / 40px 3px no-repeat, linear-gradient(90deg, transparent 4px, #2c6130 4px, #2c6130 33px, #2a2e33 33px, #2a2e33 44px, transparent 44px); }
    .tray { margin-left: auto; display: flex; align-items: center; gap: 8px; }
    .tray .clock { width: 62px; text-align: center; font-size: 11px; line-height: 18px; margin: 0 6px 0 -2px; }
    .tray .people { margin-right: 14px; }
    .tray .edge { width: 5px; height: 40px; border-left: 1px solid #5c6066; margin-left: 2px; }
  `;

  private rows(items: Item[]) {
    return html`<div class="list">${items.map((i) => html`<button class=${classMap({ item: true, off: !!i.off })}>
      ${icon(i.icon)}<span>${i.text}</span>${i.menu ? html`<span class="caret"></span>` : ""}</button>`)}</div>`;
  }

  private tool(content: unknown, menu = false, extra = "", label = "") {
    return html`<button class="glyph ${extra}" aria-label=${label}>${content}${menu ? html`<span class="caret"></span>` : ""}</button>`;
  }

  render() {
    return html`<div class="window">
      <header class="title">
        <div class="quick">
          ${icon("ppt")}<span class="bar"></span><button aria-label="Save">${icon("save")}</button>
          <span class="history"><button aria-label="Undo">${icon("undo")}</button><span class="caret"></span><button aria-label="Redo">${icon("redo")}</button></span>
          <span class="bar"></span><button class="more" aria-label="Customize"><span class="caret"></span></button>
        </div>
        <h1>Presentation2  -  Microsoft PowerPoint</h1>
        <div class="controls">
          <button aria-label="Minimize">${icon("min")}</button><button aria-label="Restore">${icon("restore")}</button><button aria-label="Close">${icon("close")}</button>
        </div>
      </header>

      <nav class="tabs">
        <button class="file">File</button><button class="home">Home</button>
        ${["Insert", "Design", "Transitions", "Animations", "Slide Show", "Review", "View"].map((t) => html`<button>${t}</button>`)}
        <span class="aids"><button aria-label="Collapse ribbon">${icon("collapse")}</button><button aria-label="Help">${icon("help")}</button></span>
      </nav>

      <section class="ribbon">
        <div class="group clip">
          <div class="body">
            <button class="big"><span class="pic">${icon("paste")}</span><span>Paste</span><span class="caret under"></span></button>
            ${this.rows(clipboardItems)}
          </div>
          <h2>Clipboard${icon("launcher")}</h2>
        </div>
        <div class="group slides">
          <div class="body">
            <button class="big"><span class="pic">${icon("newslide")}</span><span>New</span><span class="two">Slide <span class="caret"></span></span></button>
            ${this.rows(slideItems)}
          </div>
          <h2 class="plain">Slides</h2>
        </div>
        <div class="group font">
          <div class="body"><div class="tools">
            <div>
              <label class="field"><select aria-label="Font" disabled></select><span class="caret"></span></label>
              <label class="field size"><select aria-label="Font size" disabled></select><span class="caret"></span></label>
              ${this.tool(html`A<sup>▲</sup>`, false, "grow", "Grow font")}
              ${this.tool(html`A<sup>▼</sup>`, false, "shrink", "Shrink font")}
              <span class="rule"></span>
              ${this.tool(icon("clear"), false, "", "Clear formatting")}
            </div>
            <div>
              ${this.tool("B", false, "", "Bold")}${this.tool(html`<i>I</i>`, false, "", "Italic")}${this.tool(html`<u>U</u>`, false, "", "Underline")}
              ${this.tool(html`<span class="shadow">S</span>`, false, "", "Shadow")}${this.tool(html`<s>abc</s>`, false, "", "Strikethrough")}
              ${this.tool(html`<span class="av">AV</span>`, true, "wide", "Spacing")}${this.tool("Aa", true, "wide", "Case")}
              <span class="rule"></span>${this.tool("A", true, "pick", "Font color")}
            </div>
          </div></div>
          <h2>Font${icon("launcher")}</h2>
        </div>
        <div class="group para">
          <div class="body">
            <div class="tools">
              <div>
                ${this.tool(icon("bullets"), true, "pick", "Bullets")}${this.tool(icon("numbers"), true, "pick", "Numbering")}<span class="rule"></span>
                ${this.tool(icon("outdent"), false, "", "Decrease indent")}${this.tool(icon("indent"), false, "", "Increase indent")}
                <span class="rule"></span>${this.tool(icon("spacing"), true, "wide", "Line spacing")}
              </div>
              <div>
                ${this.tool(icon("left"), false, "", "Align left")}${this.tool(icon("center"), false, "", "Center")}
                ${this.tool(icon("right"), false, "", "Align right")}${this.tool(icon("justify"), false, "", "Justify")}
                <span class="rule"></span>${this.tool(icon("columns"), true, "pick", "Columns")}
              </div>
            </div>
            ${this.rows(textItems)}
          </div>
          <h2>Paragraph${icon("launcher")}</h2>
        </div>
        <div class="group draw">
          <div class="body">
            <div class="gallery">
              ${[0, 1, 2].map((r) => html`${shapes.slice(r * 6, r * 6 + 6).map((s) => html`<svg width="20" height="20" viewBox="0 0 20 20" aria-hidden="true">${s}</svg>`)}
                <button class="scroll" aria-label="Scroll shapes">${r === 2 ? html`<span class="last"></span>` : ""}<span class=${classMap({ caret: true, flip: r === 0 })}></span></button>`)}
            </div>
            <button class="big"><span class="pic">${icon("arrange")}</span><span>Arrange</span><span class="caret under"></span></button>
            <button class="big off"><span class="pic">${icon("quick")}</span><span>Quick</span><span class="two">Styles <span class="caret"></span></span></button>
            ${this.rows(shapeItems)}
          </div>
          <h2>Drawing${icon("launcher")}</h2>
        </div>
        <div class="group edit">
          <div class="body">${this.rows(editItems)}</div>
          <h2 class="plain">Editing</h2>
        </div>
      </section>

      <section class="work">
        <aside class="pane">
          <nav><button class="on">Slides</button><button>Outline</button><button class="x" aria-label="Close pane">${icon("panelx")}</button></nav>
          <div class="thumb"><span>1</span><div class="frame"><div class="mini">${slideArt()}<span class="blank"></span></div></div></div>
        </aside>
        <main class="main">
          <div class="stage">
            <div class="side">${ruler(465, true, 194)}</div>
            <div class="top">${ruler(620, false, 525)}</div>
            <div class="canvas">
              <article class="slide">${slideArt()}
                <div class="card"><div class="heading">CLICK TO ADD TITLE</div><div class="sub">Click to add subtitle</div></div>
              </article>
            </div>
          </div>
          <div class="notes">
            <textarea aria-label="Notes" placeholder="Click to add notes"></textarea>
            <div class="bars"><span class="caret flip"></span><i></i><span class="caret"></span></div>
          </div>
        </main>
      </section>

      <footer class="status">
        <span>Slide 1 of 1</span><span>"Black Tie"</span>
        <div class="views">
          <button class="on" aria-label="Normal">${icon("normal")}</button><button aria-label="Slide sorter">${icon("sorter")}</button>
          <button aria-label="Reading view">${icon("reading")}</button><button aria-label="Slide show">${icon("show")}</button>
        </div>
        <div class="percent">65%</div>
        <button aria-label="Zoom out">${icon("minus")}</button>
        <input class="zoom" type="range" min="0" max="100" value="30" aria-label="Zoom">
        <button aria-label="Zoom in">${icon("plus")}</button>
        <button class="fit" aria-label="Fit to window">${icon("fit")}</button>
      </footer>

      <footer class="taskbar">
        <button class="start" aria-label="Start">${icon("windows")}</button>
        <label class="search">${icon("cortana")}<input type="text" placeholder="Type here to search" aria-label="Search">${icon("mic")}</label>
        <div class="apps">${apps.map((a) => html`<button aria-label=${a.name}
          class=${classMap({ open: !!a.open, active: !!a.active, busy: !!a.busy })}>${icon(a.icon)}</button>`)}</div>
        <div class="tray">
          <span class="people">${icon("people")}</span>${icon("up")}${icon("yahoo")}${icon("sound")}${icon("wifi")}
          <div class="clock">12:02 PM<br>5/16/2019</div>
          ${icon("notify")}<span class="edge"></span>
        </div>
      </footer>
    </div>`;
  }
}
